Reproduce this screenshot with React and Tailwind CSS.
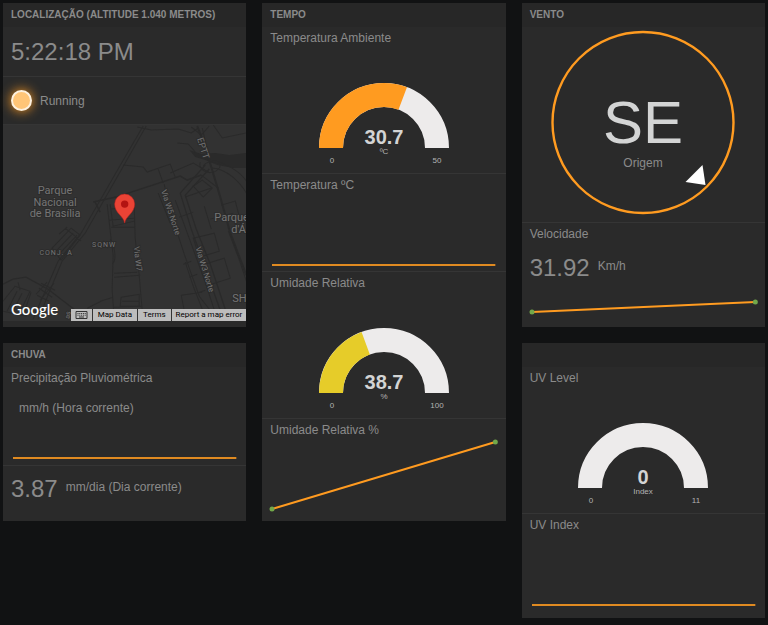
import React from "react";

const ORANGE = "#ff9b20";

function Card({ title, children }) {
  return (
    <section className="bg-[#2a2a2a] pb-[5px] text-[#8b8b8b]">
      <h2 className="h-6 bg-[#272727] px-2 text-[10px] leading-6 font-bold uppercase">{title}</h2>
      <div className="divide-y divide-[#353535]">{children}</div>
    </section>
  );
}

function Title({ children }) {
  return <h3 className="h-[22px] px-2 text-xs leading-[22px]">{children}</h3>;
}

// value: 0..1 share of the arc that is filled
function Gauge({ value, text, unit, min, max, color }) {
  const cx = 80;
  const cy = 99;
  const r = 53;
  const length = Math.PI * r;
  const arc = `M${cx - r} ${cy}A${r} ${r} 0 0 1 ${cx + r} ${cy}`;
  return (
    <svg viewBox="0 0 160 124" className="mx-auto block h-[124px] w-40" textAnchor="middle">
      <path d={arc} fill="none" stroke="#edebeb" strokeWidth="24" />
      {value > 0 && (
        <path d={arc} fill="none" stroke={color} strokeWidth="24" strokeDasharray={`${length * value} ${length * 2}`} />
      )}
      <text x={cx} y="95" className="fill-[#d3d4d4] text-[20px] font-bold">{text}</text>
      <text x={cx} y="105" className="fill-[#b3b3b3] text-[8px]">{unit}</text>
      <text x="28" y="114" className="fill-[#b3b3b3] text-[8px]">{min}</text>
      <text x="133" y="114" className="fill-[#b3b3b3] text-[8px]">{max}</text>
    </svg>
  );
}

function Sparkline({ from, to, dots, className }) {
  return (
    <div className="px-[10px]">
      <svg className={`block w-full overflow-visible ${className}`}>
        <line x1="0" y1={from} x2="100%" y2={to} stroke={ORANGE} strokeWidth="2" strokeOpacity={dots ? 1 : 0.85} />
        {dots && <circle cx="0" cy={from} r="2.5" fill="#72a84a" />}
        {dots && <circle cx="100%" cy={to} r="2.5" fill="#72a84a" />}
      </svg>
    </div>
  );
}

function Value({ value, unit }) {
  return (
    <div className="flex items-center gap-2 px-2">
      <span className="text-2xl leading-[46px]">{value}</span>
      <span className="pb-1 text-xs">{unit}</span>
    </div>
  );
}

function Compass() {
  return (
    <svg viewBox="0 0 190 195" className="mx-auto block h-[195px] w-[190px]" textAnchor="middle">
      <circle cx="95" cy="95.5" r="90.5" fill="none" stroke={ORANGE} strokeWidth="2.4" />
      <path d="M154.500 138L157.500 158L137.500 155Z" fill="#fff" />
      <text x="95" y="115.500" className="fill-[#d3d4d4] text-[60px]">SE</text>
      <text x="95" y="140" className="fill-[#8b8b8b] text-xs">Origem</text>
    </svg>
  );
}

function Map() {
  return (
    <div className="relative h-[196px] overflow-hidden bg-[#323232]">
      <svg viewBox="0 0 243 196" preserveAspectRatio="xMinYMin slice" className="block h-full w-full" fontFamily="Roboto, sans-serif">
        <path d="M186 25L198 29 212 28 226 30 243 28V43L230 43 214 40 202 35 192 32Z" fill="#2a2a2a" />
        <g fill="none" stroke="#2a2a2a" strokeWidth="1">
          <path d="M140 1L119 37 78 108 55 136 30 194M143 1L122 38 82 108 59 136 35 194" />
          <path d="M120 40L140 42 144 47 167 39 172 52M155 44L160 58M167 48L190 38 207 48" />
          <path d="M90 77L113 72 177 51 184 55 198 50M92 77L97 87" strokeWidth="1.500" />
          <path d="M134 2L148 5 175 4 188 8 195 3M210 0L219 13 243 8M174 18L185 19 192 27" />
          <path d="M194 1L202 22 217 72 227 108 243 150" strokeWidth="2" />
          <path d="M188 2L198 10 206 1M199 3L207 38M204 35C222 36 238 48 243 56M209 43C223 44 236 56 243 68M197 37C194 46 209 52 216 43C220 36 204 34 200 41" />
          <path d="M202 40L177 68 188 104 200 137 218 188M206 44L182 70 193 104 207 139 225 193" strokeWidth="1.300" />
          <path d="M190 61L199 55 209 63 200 72ZM198 50L215 63M182 72L208 63M201 81L208 104M218 80L232 76 239 103M207 94L230 88M172 75L187 116 202 157 213 191M176 92L190 87" />
          <path d="M161 59L166 83 181 129 196 171 213 193M155 68L167 98M190 113L211 108 216 126 196 132ZM198 140L221 133 227 153 205 160M225 106L235 132 243 156M182 137L190 161 199 184M180 139L188 136M186 152L194 149M193 168L202 165M178 170L199 167M178 170L181 185 210 190" />
          <path d="M104 79L108 114 110 130 109 164 111 194M107 79L110 101 131 96M131 79L132 113 136 150 139 185M108 84L119 83M106 95L132 93M108 102H132M111 148L134 147M111 152L137 150M118 172L136 169V181H117ZM119 176H136M107 114C113 124 113 136 109 139M110 182L138 181M97 176L110 172M84 183L98 176" />
          <path d="M0 159L10 154 23 152 45 164 84 194" strokeWidth="1.300" />
          <path d="M49 123L68 103 77 110 58 135ZM53 126L70 108M56 129L74 110M62 103L78 116M56 109L64 102M38 158L52 165M36 163L49 172M34 170L46 176M44 157L33 169M51 158L37 175" />
          <path d="M0 176L12 161 27 166 16 189M4 186L14 166M9 188L19 168M15 157L17 165M28 167L21 188M0 186L24 191" />
        </g>
        <g fill="#757575" stroke="#2c2c2c" strokeWidth="2" paintOrder="stroke" textAnchor="middle">
          <g fontSize="11">
            <text x="52" y="69">Parque</text>
            <text x="52" y="81">Nacional</text>
            <text x="52" y="92">de Brasília</text>
            <text x="211" y="96" textAnchor="start">Parque</text>
            <text x="228" y="108" textAnchor="start">d'Á</text>
            <text x="229" y="177" textAnchor="start">SH</text>
          </g>
          <g fontSize="7">
            <text x="53" y="130" letterSpacing="1">CONJ. A</text>
            <text x="101" y="122" letterSpacing="1">SQNW</text>
            <text transform="translate(197 24) rotate(72)" fontSize="9">EPTT</text>
            <text transform="translate(165 88) rotate(72)" fontSize="8">Via W5 Norte</text>
            <text transform="translate(132 134) rotate(83)" fontSize="8">Via W7</text>
            <text transform="translate(199 145) rotate(73)" fontSize="8">Via W3 Norte</text>
            <text transform="translate(67 190) rotate(-82)" fontSize="7">as</text>
          </g>
        </g>
        <path d="M121.500 98C120.500 91 111.500 88 111.500 79A10 10 0 0 1 131.500 79C131.500 88 122.500 91 121.500 98Z" fill="#ea4335" stroke="#c5221f" strokeWidth=".5" />
        <circle cx="121.500" cy="79" r="3.700" fill="#b31412" />
      </svg>
      <a href="#google" className="absolute bottom-0 left-2 font-[Lato,sans-serif] text-[15px] leading-6 font-medium text-white">
        Google
      </a>
      <div className="absolute right-0 bottom-0 flex h-3 divide-x divide-[#333] bg-[#bdbdbd] font-[Roboto,sans-serif] text-[8px] leading-3 text-black">
        <button type="button" aria-label="Keyboard shortcuts" className="px-1">
          <svg viewBox="0 0 13 8" className="block h-2 w-[13px]">
            <path d="M1 .5H12V7.500H1Z" fill="#bdbdbd" stroke="#333" />
            <path d="M2.500 2.500H11M2.500 4.200H11" stroke="#333" strokeDasharray="1 .8" />
            <path d="M4 6H9" stroke="#333" />
          </svg>
        </button>
        <button type="button" className="px-[5px]">Map Data</button>
        <a href="#terms" className="px-[5px]">Terms</a>
        <a href="#report" className="px-1">Report a map error</a>
      </div>
    </div>
  );
}

export default function App() {
  return (
    <main className="min-h-screen bg-[#111213] p-[3px] font-['Liberation_Sans',Arial,sans-serif]">
      <div className="grid grid-cols-3 items-start gap-4">
        <div className="flex flex-col gap-4">
          <Card title="Localização (altitude 1.040 metros)">
            <div className="px-2 text-2xl leading-[49px]">5:22:18 PM</div>
            <div className="flex h-12 items-center gap-2 px-2">
              <span className="size-[21px] rounded-full border-2 border-[#fdf1df] bg-[#ffc577] shadow-[0_0_12px_#ff9b20]" />
              <span className="text-xs">Running</span>
            </div>
            <div className="pb-px">
              <Map />
            </div>
          </Card>

          <Card title="Chuva">
            <div>
              <Title>Precipitação Pluviométrica</Title>
              <p className="px-4 text-xs leading-[38px]">mm/h (Hora corrente)</p>
              <Sparkline from={31} to={31} className="h-[38px]" />
            </div>
            <div className="pb-1">
              <Value value="3.87" unit="mm/dia (Dia corrente)" />
            </div>
          </Card>
        </div>

        <Card title="Tempo">
          <div>
            <Title>Temperatura Ambiente</Title>
            <Gauge value={0.614} text="30.7" unit="ºC" min="0" max="50" color={ORANGE} />
          </div>
          <div>
            <Title>Temperatura ºC</Title>
            <Sparkline from={69} to={69} className="h-[75px]" />
          </div>
          <div>
            <Title>Umidade Relativa</Title>
            <Gauge value={0.387} text="38.7" unit="%" min="0" max="100" color="#e6cc29" />
          </div>
          <div>
            <Title>Umidade Relativa %</Title>
            <Sparkline from={68} to={1} dots className="h-[75px]" />
          </div>
        </Card>

        <div className="flex flex-col gap-4">
          <Card title="Vento">
            <div>
              <Compass />
            </div>
            <div>
              <Title>Velocidade</Title>
              <Value value="31.92" unit="Km/h" />
              <Sparkline from={21} to={11} dots className="h-[31px]" />
            </div>
          </Card>

          <Card title="">
            <div>
              <Title>UV Level</Title>
              <Gauge value={0} text="0" unit="Index" min="0" max="11" color={ORANGE} />
            </div>
            <div>
              <Title>UV Index</Title>
              <Sparkline from={69} to={69} className="h-[77px]" />
            </div>
          </Card>
        </div>
      </div>
    </main>
  );
}
